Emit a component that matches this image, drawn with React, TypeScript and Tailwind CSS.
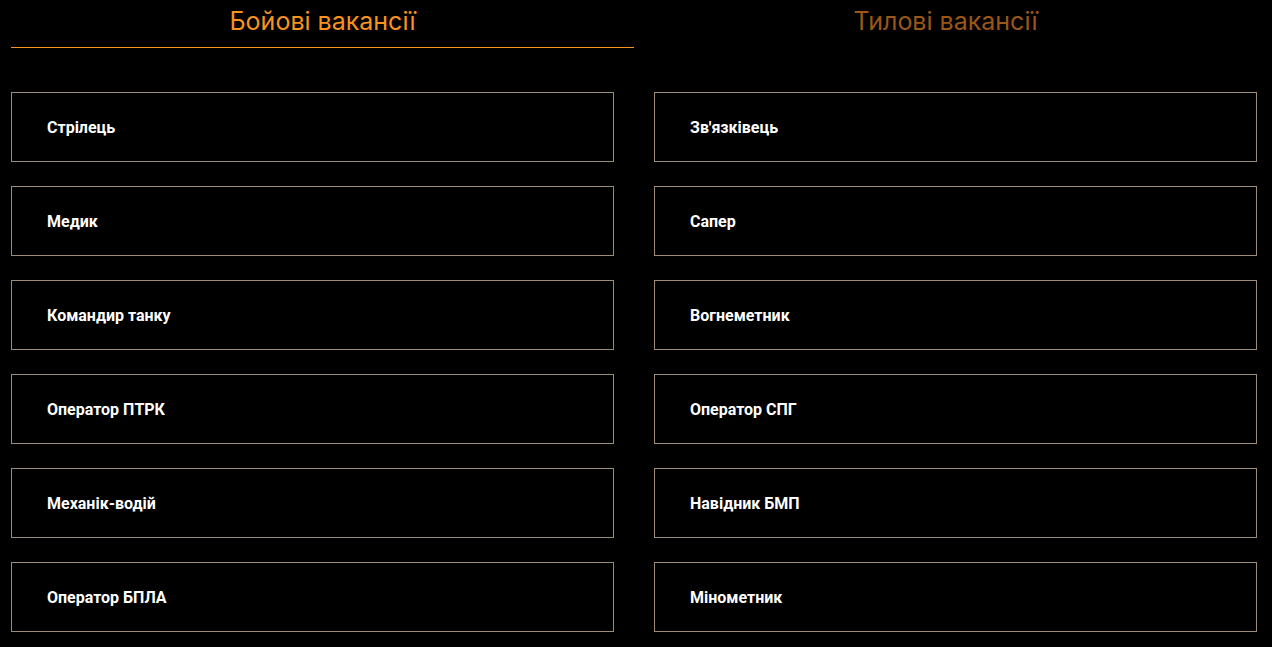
import React from "react";

const combat = ["Стрілець", "Медик", "Командир танку", "Оператор ПТРК", "Механік-водій", "Оператор БПЛА"];
const rear = ["Зв'язківець", "Сапер", "Вогнеметник", "Оператор СПГ", "Навідник БМП", "Мінометник"];

function Card({ title }: { title: string }) {
  return (
    <div className="h-[70px] border border-[#9c8b78] flex items-center pl-[35px] pt-[1px]">
      <span className="text-white text-[16px] font-bold font-['Roboto',sans-serif]">{title}</span>
    </div>
  );
}

export default function App() {
  return (
    <div className="bg-black min-h-[647px] w-full">
      <div className="w-[1246px] ml-[11px]">
        <div className="grid grid-cols-2 font-['Inter',sans-serif]">
          <div className="h-[48px] border-b border-[#f7931e] flex justify-center pt-[6px]">
            <h2 className="text-[#f7931e] text-[25px] font-normal leading-[30px]">Бойові вакансії</h2>
          </div>
          <div className="h-[48px] flex justify-center pt-[6px]">
            <h2 className="text-[#9a5716] text-[25px] font-normal leading-[30px]">Тилові вакансії</h2>
          </div>
        </div>
        <div className="grid grid-cols-2 gap-x-[40px] mt-[44px]">
          <div className="flex flex-col gap-[24px]">
            {combat.map((t) => (
              <Card key={t} title={t} />
            ))}
          </div>
          <div className="flex flex-col gap-[24px]">
            {rear.map((t) => (
              <Card key={t} title={t} />
            ))}
          </div>
        </div>
      </div>
    </div>
  );
}
